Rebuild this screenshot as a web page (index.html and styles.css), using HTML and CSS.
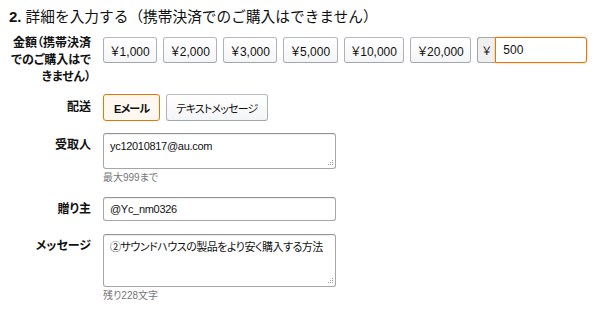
FILE: index.html
```html
<!DOCTYPE html>
<html lang="ja">
<head>
<meta charset="utf-8">
<link rel="stylesheet" href="styles.css">
</head>
<body>
<div class="wrap">
  <h2 class="title"><b>2.</b> 詳細を入力する（携帯決済でのご購入はできません）</h2>
  <div class="form">
    <div class="row row-amount">
      <div class="label">金額（携帯決済でのご購入はできません）</div>
      <div class="controls amounts">
        <button class="btn">￥1,000</button>
        <button class="btn">￥2,000</button>
        <button class="btn">￥3,000</button>
        <button class="btn">￥5,000</button>
        <button class="btn">￥10,000</button>
        <button class="btn">￥20,000</button>
        <div class="custom">
          <span class="prefix">￥</span>
          <input class="amount-input" type="text" value="500">
        </div>
      </div>
    </div>
    <div class="row row-center row-delivery">
      <div class="label">配送</div>
      <div class="controls amounts">
        <button class="btn btn-ja btn-selected">Eメール</button>
        <button class="btn btn-ja">テキストメッセージ</button>
      </div>
    </div>
    <div class="row row-to">
      <div class="label label-top">受取人</div>
      <div class="controls col">
        <div class="ta-wrap">
          <textarea class="field ta-small">yc12010817@au.com</textarea>
          <svg class="grip" width="7" height="7" viewBox="0 0 7 7"><rect x="5" y="0" width="1" height="1" fill="#9a9a9a"/><rect x="3" y="2" width="1" height="1" fill="#9a9a9a"/><rect x="5" y="2" width="1" height="1" fill="#9a9a9a"/><rect x="1" y="4" width="1" height="1" fill="#9a9a9a"/><rect x="3" y="4" width="1" height="1" fill="#9a9a9a"/><rect x="5" y="4" width="1" height="1" fill="#9a9a9a"/></svg>
        </div>
        <div class="hint">最大999まで</div>
      </div>
    </div>
    <div class="row row-center row-from">
      <div class="label">贈り主</div>
      <div class="controls">
        <input class="field input" type="text" value="@Yc_nm0326">
      </div>
    </div>
    <div class="row row-msg">
      <div class="label label-top">メッセージ</div>
      <div class="controls col">
        <div class="ta-wrap">
          <textarea class="field ta-big">②サウンドハウスの製品をより安く購入する方法</textarea>
          <svg class="grip" width="7" height="7" viewBox="0 0 7 7"><rect x="5" y="0" width="1" height="1" fill="#9a9a9a"/><rect x="3" y="2" width="1" height="1" fill="#9a9a9a"/><rect x="5" y="2" width="1" height="1" fill="#9a9a9a"/><rect x="1" y="4" width="1" height="1" fill="#9a9a9a"/><rect x="3" y="4" width="1" height="1" fill="#9a9a9a"/><rect x="5" y="4" width="1" height="1" fill="#9a9a9a"/></svg>
        </div>
        <div class="hint">残り228文字</div>
      </div>
    </div>
  </div>
</div>
</body>
</html>
```
FILE: styles.css
```css
* { box-sizing: border-box; }
body {
  margin: 0;
  background: #fff;
  color: #111;
  font-family: "Liberation Sans", "Noto Sans CJK JP", sans-serif;
  font-size: 12px;
}
.wrap { padding: 6px 0 0 9px; }
.title {
  margin: 0;
  font-size: 14.7px;
  line-height: 22px;
  font-weight: normal;
}
.title b { font-weight: bold; font-size: 15px; }
.form { margin-top: 7px; }
.row { display: flex; gap: 12px; }
.row-center { align-items: center; }
.label {
  width: 82px;
  flex: none;
  text-align: right;
  font-weight: bold;
  font-size: 12px;
  line-height: 17px;
  font-feature-settings: "palt";
}
.label-top { padding-top: 4px; }
.controls { display: flex; }
.amounts { gap: 6px; align-items: flex-start; }
.row-amount .amounts { margin-top: 2px; }
.col { flex-direction: column; }
.btn {
  height: 26px;
  padding: 0 6.5px;
  margin: 0;
  border: 1px solid #adb1b8;
  border-top-color: #b7babf;
  border-bottom-color: #a2a6ac;
  border-radius: 3px;
  background: linear-gradient(#ffffff, #f4f5f6);
  font-family: "Liberation Sans", "Noto Sans CJK JP", sans-serif;
  font-size: 12px;
  color: #111;
  font-feature-settings: "palt";
}
.btn-ja {
  height: 27px;
  font-size: 11px;
  letter-spacing: -0.8px;
  padding: 0 9px;
}
.btn-selected {
  border-color: #e77600;
  background: #fef8f1;
  font-weight: bold;
  padding: 0 10px;
}
.custom { display: flex; }
.prefix {
  width: 18px;
  height: 26px;
  border: 1px solid #a6a6a6;
  border-right: none;
  border-radius: 3px 0 0 3px;
  background: #f0f0f0;
  display: flex;
  align-items: center;
  justify-content: center;
  font-size: 11px;
}
.amount-input {
  width: 92px;
  height: 26px;
  border: 1px solid #e77600;
  border-radius: 0 3px 3px 0;
  box-shadow: 0 0 2px rgba(228, 121, 17, 0.5);
  padding: 0 7px;
  font-family: "Liberation Sans", sans-serif;
  font-size: 12px;
  color: #111;
  outline: none;
}
.row-delivery { margin-top: 8px; }
.row-to { margin-top: 12px; }
.row-from { margin-top: 12px; }
.row-msg { margin-top: 13px; }
.field {
  display: block;
  width: 233px;
  border: 1px solid #a6a6a6;
  border-top-color: #949494;
  border-radius: 3px;
  box-shadow: inset 0 1px 0 rgba(0, 0, 0, 0.07);
  font-family: "Liberation Sans", "Noto Sans CJK JP", sans-serif;
  font-size: 11px;
  letter-spacing: -0.3px;
  color: #111;
  padding: 5px 6px;
  margin: 0;
  outline: none;
  font-feature-settings: "palt";
}
.ta-wrap { position: relative; width: 233px; }
textarea.field { resize: none; line-height: 15px; overflow: hidden; }
.ta-big { letter-spacing: -0.5px; }
.ta-small { height: 36px; }
.ta-big { height: 53px; }
.input { height: 24px; padding: 0 6px; }
.grip { position: absolute; right: 2px; bottom: 2px; }
.hint {
  margin-top: 2px;
  font-size: 10px;
  line-height: 14px;
  color: #767676;
  font-feature-settings: "palt";
}
```
